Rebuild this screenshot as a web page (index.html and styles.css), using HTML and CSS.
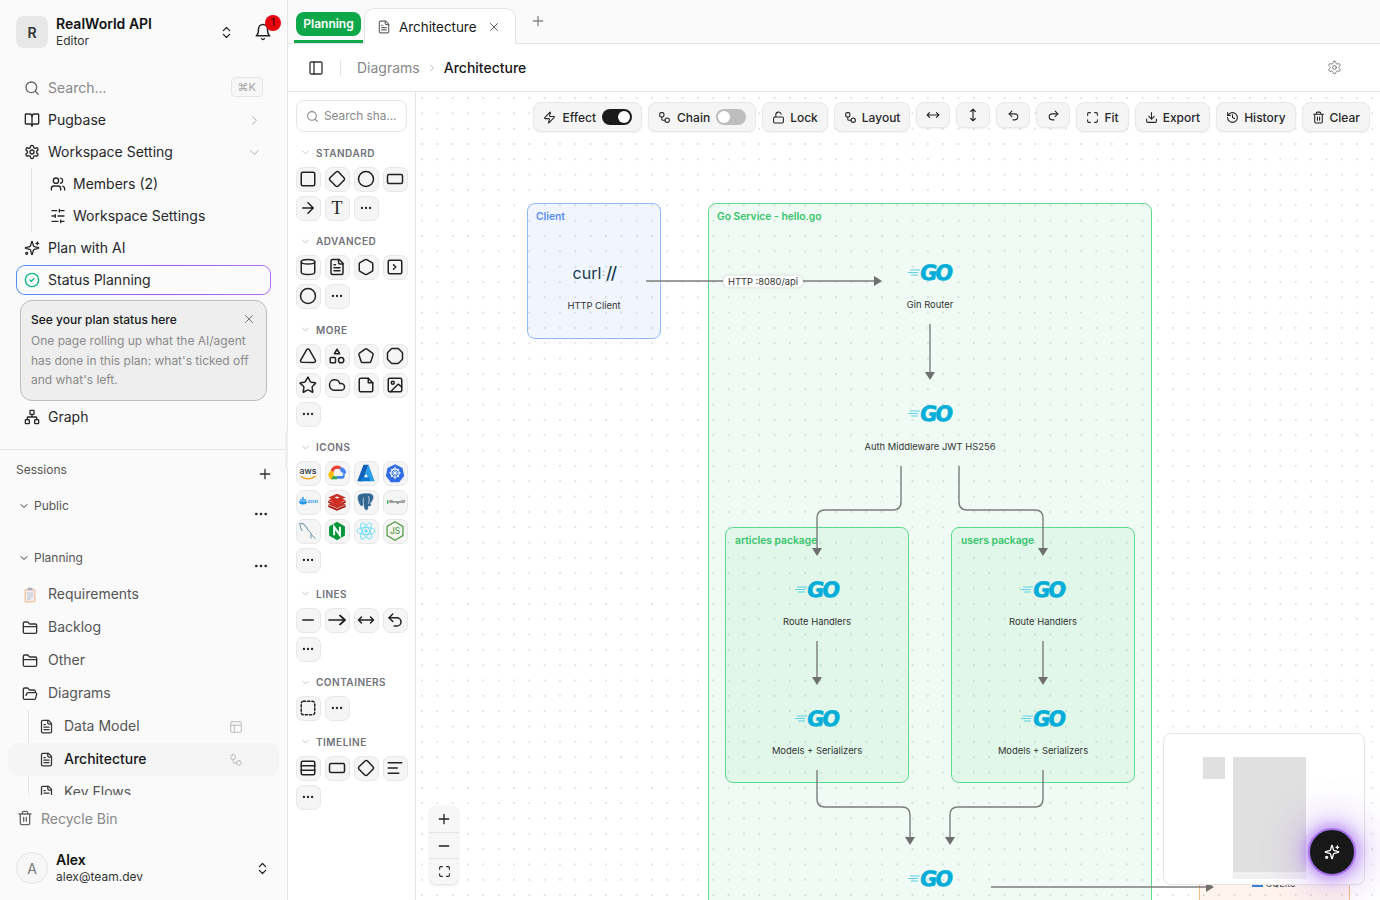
FILE: index.html
```html
<!DOCTYPE html>
<html lang="en">
<head>
    <meta charset="UTF-8">
    <title>Architecture - RealWorld API</title>
    <link rel="stylesheet" href="styles.css">
</head>
<body>
    <!-- icon sprite -->
    <svg class="sprite" xmlns="http://www.w3.org/2000/svg">
        <symbol id="i-search" viewBox="0 0 24 24"><circle cx="11" cy="11" r="8"/><path d="m21 21-4.3-4.3"/></symbol>
        <symbol id="i-book" viewBox="0 0 24 24"><path d="M12 7v14"/><path d="M3 18a1 1 0 0 1-1-1V4a1 1 0 0 1 1-1h5a4 4 0 0 1 4 4 4 4 0 0 1 4-4h5a1 1 0 0 1 1 1v13a1 1 0 0 1-1 1h-6a3 3 0 0 0-3 3 3 3 0 0 0-3-3z"/></symbol>
        <symbol id="i-right" viewBox="0 0 24 24"><path d="m9 18 6-6-6-6"/></symbol>
        <symbol id="i-down" viewBox="0 0 24 24"><path d="m6 9 6 6 6-6"/></symbol>
        <symbol id="i-updown" viewBox="0 0 24 24"><path d="m7 15 5 5 5-5"/><path d="m7 9 5-5 5 5"/></symbol>
        <symbol id="i-gear" viewBox="0 0 24 24"><path d="M12.22 2h-.44a2 2 0 0 0-2 2v.18a2 2 0 0 1-1 1.73l-.43.25a2 2 0 0 1-2 0l-.15-.08a2 2 0 0 0-2.73.73l-.22.38a2 2 0 0 0 .73 2.73l.15.1a2 2 0 0 1 1 1.72v.51a2 2 0 0 1-1 1.74l-.15.09a2 2 0 0 0-.73 2.73l.22.38a2 2 0 0 0 2.73.73l.15-.08a2 2 0 0 1 2 0l.43.25a2 2 0 0 1 1 1.73V20a2 2 0 0 0 2 2h.44a2 2 0 0 0 2-2v-.18a2 2 0 0 1 1-1.73l.43-.25a2 2 0 0 1 2 0l.15.08a2 2 0 0 0 2.73-.73l.22-.39a2 2 0 0 0-.73-2.73l-.15-.08a2 2 0 0 1-1-1.74v-.5a2 2 0 0 1 1-1.74l.15-.09a2 2 0 0 0 .73-2.73l-.22-.38a2 2 0 0 0-2.73-.73l-.15.08a2 2 0 0 1-2 0l-.43-.25a2 2 0 0 1-1-1.73V4a2 2 0 0 0-2-2z"/><circle cx="12" cy="12" r="3"/></symbol>
        <symbol id="i-users" viewBox="0 0 24 24"><path d="M16 21v-2a4 4 0 0 0-4-4H6a4 4 0 0 0-4 4v2"/><circle cx="9" cy="7" r="4"/><path d="M22 21v-2a4 4 0 0 0-3-3.87"/><path d="M16 3.13a4 4 0 0 1 0 7.75"/></symbol>
        <symbol id="i-sliders" viewBox="0 0 24 24"><path d="M21 4h-7M10 4H3M21 12h-9M8 12H3M21 20h-5M12 20H3M14 2v4M8 10v4M16 18v4"/></symbol>
        <symbol id="i-sparkle" viewBox="0 0 24 24"><path d="M9.937 15.5A2 2 0 0 0 8.5 14.063l-6.135-1.582a.5.5 0 0 1 0-.962L8.5 9.936A2 2 0 0 0 9.937 8.5l1.582-6.135a.5.5 0 0 1 .963 0L14.063 8.5A2 2 0 0 0 15.5 9.937l6.135 1.581a.5.5 0 0 1 0 .964L15.5 14.063a2 2 0 0 0-1.437 1.437l-1.582 6.135a.5.5 0 0 1-.963 0z"/><path d="M20 3v4M22 5h-4"/><circle cx="4" cy="20" r="1.5"/></symbol>
        <symbol id="i-check" viewBox="0 0 24 24"><circle cx="12" cy="12" r="10"/><path d="m9 12 2 2 4-4"/></symbol>
        <symbol id="i-x" viewBox="0 0 24 24"><path d="M18 6 6 18M6 6l12 12"/></symbol>
        <symbol id="i-plus" viewBox="0 0 24 24"><path d="M5 12h14M12 5v14"/></symbol>
        <symbol id="i-minus" viewBox="0 0 24 24"><path d="M5 12h14"/></symbol>
        <symbol id="i-dots" viewBox="0 0 24 24"><g fill="currentColor" stroke="none"><circle cx="5" cy="12" r="2"/><circle cx="12" cy="12" r="2"/><circle cx="19" cy="12" r="2"/></g></symbol>
        <symbol id="i-graph" viewBox="0 0 24 24"><rect x="16" y="16" width="6" height="6" rx="1"/><rect x="2" y="16" width="6" height="6" rx="1"/><rect x="9" y="2" width="6" height="6" rx="1"/><path d="M5 16v-3a1 1 0 0 1 1-1h12a1 1 0 0 1 1 1v3"/><path d="M12 12V8"/></symbol>
        <symbol id="i-folder" viewBox="0 0 24 24"><path d="M20 20a2 2 0 0 0 2-2V8a2 2 0 0 0-2-2h-7.9a2 2 0 0 1-1.69-.9L9.6 3.9A2 2 0 0 0 7.93 3H4a2 2 0 0 0-2 2v13a2 2 0 0 0 2 2Z"/><path d="M2 10h20"/></symbol>
        <symbol id="i-folder-open" viewBox="0 0 24 24"><path d="m6 14 1.5-2.9A2 2 0 0 1 9.24 10H20a2 2 0 0 1 1.94 2.5l-1.54 6a2 2 0 0 1-1.95 1.5H4a2 2 0 0 1-2-2V5a2 2 0 0 1 2-2h3.9a2 2 0 0 1 1.69.9l.81 1.2a2 2 0 0 0 1.67.9H18a2 2 0 0 1 2 2v2"/></symbol>
        <symbol id="i-file" viewBox="0 0 24 24"><path d="M15 2H6a2 2 0 0 0-2 2v16a2 2 0 0 0 2 2h12a2 2 0 0 0 2-2V7Z"/><path d="M14 2v4a2 2 0 0 0 2 2h4"/><path d="M10 9H8M16 13H8M16 17H8"/></symbol>
        <symbol id="i-table" viewBox="0 0 24 24"><rect x="3" y="3" width="18" height="18" rx="2"/><path d="M3 9h18M9 21V9"/></symbol>
        <symbol id="i-flow" viewBox="0 0 24 24"><rect x="3" y="3" width="8" height="8" rx="3"/><path d="M7 11v4a2 2 0 0 0 2 2h4"/><rect x="13" y="13" width="8" height="8" rx="4"/></symbol>
        <symbol id="i-trash" viewBox="0 0 24 24"><path d="M3 6h18M19 6v14c0 1-1 2-2 2H7c-1 0-2-1-2-2V6M8 6V4c0-1 1-2 2-2h4c1 0 2 1 2 2v2M10 11v6M14 11v6"/></symbol>
        <symbol id="i-panel" viewBox="0 0 24 24"><rect x="3" y="3" width="18" height="18" rx="2"/><path d="M9 3v18"/></symbol>
        <symbol id="i-bell" viewBox="0 0 24 24"><path d="M6 8a6 6 0 0 1 12 0c0 7 3 9 3 9H3s3-2 3-9"/><path d="M10.3 21a1.94 1.94 0 0 0 3.4 0"/></symbol>
        <symbol id="i-zap" viewBox="0 0 24 24"><path d="M4 14a1 1 0 0 1-.78-1.63l9.9-10.2a.5.5 0 0 1 .86.46l-1.92 6.02A1 1 0 0 0 13 10h7a1 1 0 0 1 .78 1.63l-9.9 10.2a.5.5 0 0 1-.86-.46l1.92-6.02A1 1 0 0 0 11 14z"/></symbol>
        <symbol id="i-lock" viewBox="0 0 24 24"><rect x="3" y="11" width="18" height="11" rx="2"/><path d="M7 11V7a5 5 0 0 1 9.9-1"/></symbol>
        <symbol id="i-hmove" viewBox="0 0 24 24"><path d="m18 8 4 4-4 4M2 12h20M6 8l-4 4 4 4"/></symbol>
        <symbol id="i-vmove" viewBox="0 0 24 24"><path d="M12 2v20M8 18l4 4 4-4M8 6l4-4 4 4"/></symbol>
        <symbol id="i-undo" viewBox="0 0 24 24"><path d="M9 14 4 9l5-5"/><path d="M4 9h10.5a5.5 5.5 0 0 1 0 11H11"/></symbol>
        <symbol id="i-redo" viewBox="0 0 24 24"><path d="m15 14 5-5-5-5"/><path d="M20 9H9.5a5.5 5.5 0 0 0 0 11H13"/></symbol>
        <symbol id="i-fit" viewBox="0 0 24 24"><path d="M8 3H5a2 2 0 0 0-2 2v3M21 8V5a2 2 0 0 0-2-2h-3M3 16v3a2 2 0 0 0 2 2h3M16 21h3a2 2 0 0 0 2-2v-3"/></symbol>
        <symbol id="i-download" viewBox="0 0 24 24"><path d="M21 15v4a2 2 0 0 1-2 2H5a2 2 0 0 1-2-2v-4"/><path d="m7 10 5 5 5-5M12 15V3"/></symbol>
        <symbol id="i-history" viewBox="0 0 24 24"><path d="M3 12a9 9 0 1 0 9-9 9.75 9.75 0 0 0-6.74 2.74L3 8"/><path d="M3 3v5h5M12 7v5l4 2"/></symbol>

        <symbol id="s-square" viewBox="0 0 24 24"><rect x="3" y="3" width="18" height="18" rx="2"/></symbol>
        <symbol id="s-diamond" viewBox="0 0 24 24"><path d="M2.7 10.3a2.41 2.41 0 0 0 0 3.41l7.59 7.59a2.41 2.41 0 0 0 3.41 0l7.59-7.59a2.41 2.41 0 0 0 0-3.41L14.1 2.7a2.41 2.41 0 0 0-3.41 0Z"/></symbol>
        <symbol id="s-circle" viewBox="0 0 24 24"><circle cx="12" cy="12" r="10"/></symbol>
        <symbol id="s-rect" viewBox="0 0 24 24"><rect x="2" y="6" width="20" height="12" rx="2"/></symbol>
        <symbol id="s-arrow" viewBox="0 0 24 24"><path d="M5 12h14M12 5l7 7-7 7"/></symbol>
        <symbol id="s-cylinder" viewBox="0 0 24 24"><ellipse cx="12" cy="5" rx="9" ry="3"/><path d="M3 5v14a9 3 0 0 0 18 0V5"/></symbol>
        <symbol id="s-hexagon" viewBox="0 0 24 24"><path d="M21 16V8a2 2 0 0 0-1-1.73l-7-4a2 2 0 0 0-2 0l-7 4A2 2 0 0 0 3 8v8a2 2 0 0 0 1 1.73l7 4a2 2 0 0 0 2 0l7-4A2 2 0 0 0 21 16z"/></symbol>
        <symbol id="s-terminal" viewBox="0 0 24 24"><rect x="3" y="3" width="18" height="18" rx="2"/><path d="m10 9 3 3-3 3"/></symbol>
        <symbol id="s-triangle" viewBox="0 0 24 24"><path d="M13.7 3.5a2 2 0 0 0-3.4 0l-8 14A2 2 0 0 0 4 20.5h16a2 2 0 0 0 1.7-3z"/></symbol>
        <symbol id="s-shapes" viewBox="0 0 24 24"><path d="M12 3 8.5 9h7z"/><rect x="3" y="14" width="7" height="7" rx="1"/><circle cx="17.5" cy="17.5" r="3.5"/></symbol>
        <symbol id="s-pentagon" viewBox="0 0 24 24"><path d="M10.8 2.9a2 2 0 0 1 2.4 0l7.5 5.4a2 2 0 0 1 .7 2.2l-2.9 8.8a2 2 0 0 1-1.9 1.4H7.4a2 2 0 0 1-1.9-1.4l-2.9-8.8a2 2 0 0 1 .7-2.2z"/></symbol>
        <symbol id="s-octagon" viewBox="0 0 24 24"><path d="M8.3 2h7.4a2 2 0 0 1 1.4.6l4.3 4.3a2 2 0 0 1 .6 1.4v7.4a2 2 0 0 1-.6 1.4l-4.3 4.3a2 2 0 0 1-1.4.6H8.3a2 2 0 0 1-1.4-.6l-4.3-4.3a2 2 0 0 1-.6-1.4V8.3a2 2 0 0 1 .6-1.4l4.3-4.3A2 2 0 0 1 8.3 2z"/></symbol>
        <symbol id="s-star" viewBox="0 0 24 24"><path d="M11.5 2.3a.5.5 0 0 1 1 0l2.3 4.7a2 2 0 0 0 1.6 1.2l5.2.8a.5.5 0 0 1 .3.9l-3.8 3.7a2 2 0 0 0-.6 1.9l.9 5.2a.5.5 0 0 1-.8.6l-4.6-2.5a2 2 0 0 0-2 0l-4.6 2.5a.5.5 0 0 1-.8-.6l.9-5.2a2 2 0 0 0-.6-1.9L1.6 9.9a.5.5 0 0 1 .3-.9l5.2-.8A2 2 0 0 0 8.7 7z"/></symbol>
        <symbol id="s-cloud" viewBox="0 0 24 24"><path d="M17.5 19H9a7 7 0 1 1 6.71-9h1.79a4.5 4.5 0 1 1 0 9Z"/></symbol>
        <symbol id="s-note" viewBox="0 0 24 24"><path d="M15 3H5a2 2 0 0 0-2 2v14a2 2 0 0 0 2 2h14a2 2 0 0 0 2-2V9z"/><path d="M15 3v6h6"/></symbol>
        <symbol id="s-image" viewBox="0 0 24 24"><rect x="3" y="3" width="18" height="18" rx="2"/><circle cx="9" cy="9" r="2"/><path d="m21 15-3.1-3.1a2 2 0 0 0-2.8 0L6 21"/></symbol>
        <symbol id="s-dashed" viewBox="0 0 24 24"><rect x="3" y="3" width="18" height="18" rx="3" stroke-dasharray="3 2.6"/></symbol>
        <symbol id="s-rows" viewBox="0 0 24 24"><rect x="3" y="3" width="18" height="18" rx="2"/><path d="M3 9h18M3 15h18"/></symbol>
        <symbol id="s-lines" viewBox="0 0 24 24"><path d="M21 5H3M15 12H3M17 19H3"/></symbol>

        <symbol id="b-aws" viewBox="0 0 24 24"><text x="12" y="13" class="b-text" font-size="10.5" font-weight="500" fill="#252f3e" text-anchor="middle">aws</text><path d="M3 16c5 4 13 4 18 0" fill="none" stroke="#f90" stroke-width="1.6"/></symbol>
        <symbol id="b-gcloud" viewBox="0 0 24 24"><path d="M15 7.5 17.5 5A8 8 0 0 0 4.5 9l3 2.500A5 5 0 0 1 15 7.5z" fill="#ea4335"/><path d="M17.5 5 15 7.5a5 5 0 0 1 1.8 3.5h1A3.5 3.5 0 0 1 21 14l2-2.500A8 8 0 0 0 17.5 5z" fill="#4285f4"/><path d="M21 14a3.5 3.5 0 0 1-3 5h-6v-3.500h6a1.8 1.8 0 0 0 0-3.500l1-1z" fill="#4285f4"/><path d="M4.5 9A6 6 0 0 0 5 19.5h2.500L9 16a2.500 2.500 0 0 1 .5-4.500l-2 0z" fill="#fbbc05"/><path d="M5 19.5h7V16H7z" fill="#34a853"/></symbol>
        <symbol id="b-azure" viewBox="0 0 24 24"><path d="M9 2h6L8 22H1.5z" fill="#0f5fb5"/><path d="M15 2l7.5 20H16L13 14l-3 .1z" fill="#2a9fe8"/><path d="M7 17h9l1 5H5z" fill="#0a78d4"/></symbol>
        <symbol id="b-k8s" viewBox="0 0 24 24"><path d="M12 1.5 21 6l2 9.500-6 7.500H7l-6-7.500L3 6z" fill="#326ce5"/><circle cx="12" cy="12" r="5" fill="none" stroke="#fff" stroke-width="1.3"/><path d="M12 4.500v15M5 12h14M7 7l10 10M17 7 7 17" stroke="#fff" stroke-width="1"/></symbol>
        <symbol id="b-docker" viewBox="0 0 24 24"><path d="M1 11h10c0 2.500-2 4-5 4-3 0-4.500-1.500-5-4z" fill="#2496ed"/><path d="M2.500 8.500h2v2h-2zM5 8.500h2v2H5zM7.500 8.500h2v2h-2zM5 6h2v2H5z" fill="#2496ed"/><text x="11.5" y="13" class="b-text" font-size="4.5" font-weight="600" fill="#2496ed">docker</text></symbol>
        <symbol id="b-redis" viewBox="0 0 24 24"><path d="M1.5 15.500 12 20l10.500-4.500V18L12 22.500 1.500 18z" fill="#a41e11"/><path d="M1.5 10.500 12 15l10.500-4.500V13L12 17.500 1.500 13z" fill="#a41e11"/><path d="M1.5 15 12 10.500 22.500 15 12 19.500z" fill="#c6302b"/><path d="M1.5 10 12 5.500 22.500 10 12 14.500z" fill="#d82c20"/><path d="M1.5 6.500 12 2l10.500 4.500L12 11z" fill="#c6302b"/><path d="M9 6.500l3-1.200 3 1.200-3 1.200z" fill="#fff"/></symbol>
        <symbol id="b-pg" viewBox="0 0 24 24"><path d="M6 2c-3 0-5 3-4 7 1 3 2 7 4 8 1 .5 2-.5 3-2 0 3 1 7 3.500 7 2 0 2.500-2 2.500-5 1.500.5 3 0 3.500-1 .5-1-1-1-1-2 2-3 5-7 3-10-2-2.500-5-3-8-2.500C11 .5 8.500 2 6 2z" fill="#336791" stroke="#fff" stroke-width=".6"/><path d="M9 7c-.5 3-.5 6 0 8M15 5c1 3 1 6 0 9" fill="none" stroke="#fff" stroke-width=".8"/></symbol>
        <symbol id="b-mongo" viewBox="0 0 24 24"><path d="M2.500 10H4v4H2.500z" fill="#13aa52"/><text x="5" y="13.5" class="b-text" font-size="4.2" font-weight="600" fill="#555">MongoDB</text></symbol>
        <symbol id="b-mysql" viewBox="0 0 24 24"><path d="M2 3c4-1 7 2 9 6 1.500 3 4 4 5 7 1 2 3 3 5 5M2 3c1 3 1 6 3 9M16 16c-1 1-1 3 0 5" fill="none" stroke="#4a7a94" stroke-width="1"/><path d="M5 3.500c3 1 5 3 6.500 6" fill="none" stroke="#8aa" stroke-width=".7"/></symbol>
        <symbol id="b-nginx" viewBox="0 0 24 24"><path d="M12 1 21.500 6.500v11L12 23l-9.500-5.500v-11z" fill="#009639"/><path d="M8.500 17V7l7 10V7" fill="none" stroke="#fff" stroke-width="2.4"/></symbol>
        <symbol id="b-react" viewBox="0 0 24 24"><circle cx="12" cy="12" r="2" fill="#61dafb"/><g fill="none" stroke="#61dafb" stroke-width="1"><ellipse cx="12" cy="12" rx="11" ry="4.2"/><ellipse cx="12" cy="12" rx="11" ry="4.2" transform="rotate(60 12 12)"/><ellipse cx="12" cy="12" rx="11" ry="4.2" transform="rotate(120 12 12)"/></g></symbol>
        <symbol id="b-node" viewBox="0 0 24 24"><path d="M12 1 21.500 6.500v11L12 23l-9.500-5.500v-11z" fill="none" stroke="#539e43" stroke-width="1.5"/><text x="12" y="16" class="b-text" font-size="10" font-weight="500" fill="#539e43" text-anchor="middle">JS</text></symbol>
    </svg>

    <div class="app">
        <aside class="sidebar">
            <div class="workspace">
                <div class="avatar avatar-ws">R</div>
                <div class="who">
                    <strong>RealWorld API</strong>
                    <span>Editor</span>
                </div>
                <svg class="ic updown"><use href="#i-updown"/></svg>
                <div class="bell">
                    <svg class="ic ic-18"><use href="#i-bell"/></svg>
                    <span class="badge">1</span>
                </div>
            </div>

            <nav class="nav">
                <div class="nav-row muted">
                    <svg class="ic"><use href="#i-search"/></svg>
                    <span class="grow">Search...</span>
                    <kbd class="kbd">⌘K</kbd>
                </div>
                <div class="nav-row">
                    <svg class="ic"><use href="#i-book"/></svg>
                    <span class="grow">Pugbase</span>
                    <svg class="ic chev"><use href="#i-right"/></svg>
                </div>
                <div class="nav-row">
                    <svg class="ic"><use href="#i-gear"/></svg>
                    <span class="grow">Workspace Setting</span>
                    <svg class="ic chev"><use href="#i-down"/></svg>
                </div>
                <div class="nav-sub">
                    <div class="nav-row">
                        <svg class="ic"><use href="#i-users"/></svg>
                        <span>Members (2)</span>
                    </div>
                    <div class="nav-row">
                        <svg class="ic"><use href="#i-sliders"/></svg>
                        <span>Workspace Settings</span>
                    </div>
                </div>
                <div class="nav-row">
                    <svg class="ic"><use href="#i-sparkle"/></svg>
                    <span>Plan with AI</span>
                </div>
                <div class="nav-row status">
                    <svg class="ic ic-green"><use href="#i-check"/></svg>
                    <span>Status Planning</span>
                </div>
            </nav>

            <div class="callout">
                <div class="callout-head">
                    <strong>See your plan status here</strong>
                    <svg class="ic ic-14"><use href="#i-x"/></svg>
                </div>
                <p>One page rolling up what the AI/agent has done in this plan: what's ticked off and what's left.</p>
            </div>

            <div class="nav-row graph-row">
                <svg class="ic"><use href="#i-graph"/></svg>
                <span>Graph</span>
            </div>

            <div class="sessions">
                <div class="sessions-head">
                    <span>Sessions</span>
                    <svg class="ic plus"><use href="#i-plus"/></svg>
                </div>
                <div class="group-row group-public">
                    <svg class="ic ic-12"><use href="#i-down"/></svg>
                    <span class="grow">Public</span>
                    <svg class="ic dots"><use href="#i-dots"/></svg>
                </div>
                <div class="group-row group-planning">
                    <svg class="ic ic-12"><use href="#i-down"/></svg>
                    <span class="grow">Planning</span>
                    <svg class="ic dots"><use href="#i-dots"/></svg>
                </div>
                <div class="tree-row">
                    <svg class="clipboard" viewBox="0 0 16 16">
                        <rect x="2.5" y="2" width="11" height="13.5" rx="1.5" fill="#f3c9a8"/>
                        <rect x="4" y="3.5" width="8" height="10.5" fill="#eeeef4"/>
                        <path d="M5 6h6M5 8h6M5 10h6M5 12h4" stroke="#b9b9cc" stroke-width=".8"/>
                        <rect x="5.5" y=".8" width="5" height="2.5" rx=".8" fill="#b0b0bc"/>
                    </svg>
                    <span>Requirements</span>
                </div>
                <div class="tree-row">
                    <svg class="ic"><use href="#i-folder"/></svg>
                    <span>Backlog</span>
                </div>
                <div class="tree-row">
                    <svg class="ic"><use href="#i-folder"/></svg>
                    <span>Other</span>
                </div>
                <div class="tree-row">
                    <svg class="ic"><use href="#i-folder-open"/></svg>
                    <span>Diagrams</span>
                </div>
                <div class="tree-sub">
                    <div class="tree-row">
                        <svg class="ic ic-15"><use href="#i-file"/></svg>
                        <span class="grow">Data Model</span>
                        <svg class="ic ic-14 trail"><use href="#i-table"/></svg>
                    </div>
                    <div class="tree-row active">
                        <svg class="ic ic-15"><use href="#i-file"/></svg>
                        <span class="grow">Architecture</span>
                        <svg class="ic ic-14 trail"><use href="#i-flow"/></svg>
                    </div>
                    <div class="tree-row">
                        <svg class="ic ic-15"><use href="#i-file"/></svg>
                        <span class="grow">Key Flows</span>
                    </div>
                </div>
            </div>

            <div class="recycle">
                <svg class="ic"><use href="#i-trash"/></svg>
                <span>Recycle Bin</span>
            </div>

            <div class="user">
                <div class="avatar avatar-user">A</div>
                <div class="who">
                    <strong>Alex</strong>
                    <span>alex@team.dev</span>
                </div>
                <svg class="ic updown"><use href="#i-updown"/></svg>
            </div>
        </aside>

        <main class="main">
            <div class="tabbar">
                <div class="tab-planning"><span>Planning</span></div>
                <div class="tab">
                    <svg class="ic ic-14 tab-doc"><use href="#i-file"/></svg>
                    <span>Architecture</span>
                    <svg class="ic ic-14 tab-x"><use href="#i-x"/></svg>
                </div>
                <svg class="ic tab-add"><use href="#i-plus"/></svg>
            </div>

            <header class="crumbs">
                <svg class="ic panel-ic"><use href="#i-panel"/></svg>
                <span class="crumb-sep"></span>
                <span class="crumb">Diagrams</span>
                <svg class="ic ic-12 crumb-chev"><use href="#i-right"/></svg>
                <span class="crumb crumb-now">Architecture</span>
                <svg class="ic crumb-gear"><use href="#i-gear"/></svg>
            </header>

            <div class="workarea">
                <section class="shapes">
                    <div class="shape-search">
                        <svg class="ic ic-13"><use href="#i-search"/></svg>
                        <span>Search sha...</span>
                    </div>

                    <div class="shape-head"><svg class="ic ic-11"><use href="#i-down"/></svg>STANDARD</div>
                    <div class="shape-grid">
                        <button class="shape"><svg class="ic"><use href="#s-square"/></svg></button>
                        <button class="shape"><svg class="ic"><use href="#s-diamond"/></svg></button>
                        <button class="shape"><svg class="ic"><use href="#s-circle"/></svg></button>
                        <button class="shape"><svg class="ic"><use href="#s-rect"/></svg></button>
                        <button class="shape"><svg class="ic"><use href="#s-arrow"/></svg></button>
                        <button class="shape shape-t">T</button>
                        <button class="shape"><svg class="ic ic-14"><use href="#i-dots"/></svg></button>
                    </div>

                    <div class="shape-head"><svg class="ic ic-11"><use href="#i-down"/></svg>ADVANCED</div>
                    <div class="shape-grid">
                        <button class="shape"><svg class="ic"><use href="#s-cylinder"/></svg></button>
                        <button class="shape"><svg class="ic"><use href="#i-file"/></svg></button>
                        <button class="shape"><svg class="ic"><use href="#s-hexagon"/></svg></button>
                        <button class="shape"><svg class="ic"><use href="#s-terminal"/></svg></button>
                        <button class="shape"><svg class="ic"><use href="#s-circle"/></svg></button>
                        <button class="shape"><svg class="ic ic-14"><use href="#i-dots"/></svg></button>
                    </div>

                    <div class="shape-head"><svg class="ic ic-11"><use href="#i-down"/></svg>MORE</div>
                    <div class="shape-grid">
                        <button class="shape"><svg class="ic"><use href="#s-triangle"/></svg></button>
                        <button class="shape"><svg class="ic"><use href="#s-shapes"/></svg></button>
                        <button class="shape"><svg class="ic"><use href="#s-pentagon"/></svg></button>
                        <button class="shape"><svg class="ic"><use href="#s-octagon"/></svg></button>
                        <button class="shape"><svg class="ic"><use href="#s-star"/></svg></button>
                        <button class="shape"><svg class="ic"><use href="#s-cloud"/></svg></button>
                        <button class="shape"><svg class="ic"><use href="#s-note"/></svg></button>
                        <button class="shape"><svg class="ic"><use href="#s-image"/></svg></button>
                        <button class="shape"><svg class="ic ic-14"><use href="#i-dots"/></svg></button>
                    </div>

                    <div class="shape-head"><svg class="ic ic-11"><use href="#i-down"/></svg>ICONS</div>
                    <div class="shape-grid">
                        <button class="shape"><svg class="brand"><use href="#b-aws"/></svg></button>
                        <button class="shape"><svg class="brand"><use href="#b-gcloud"/></svg></button>
                        <button class="shape"><svg class="brand"><use href="#b-azure"/></svg></button>
                        <button class="shape"><svg class="brand"><use href="#b-k8s"/></svg></button>
                        <button class="shape"><svg class="brand"><use href="#b-docker"/></svg></button>
                        <button class="shape"><svg class="brand"><use href="#b-redis"/></svg></button>
                        <button class="shape"><svg class="brand"><use href="#b-pg"/></svg></button>
                        <button class="shape"><svg class="brand"><use href="#b-mongo"/></svg></button>
                        <button class="shape"><svg class="brand"><use href="#b-mysql"/></svg></button>
                        <button class="shape"><svg class="brand"><use href="#b-nginx"/></svg></button>
                        <button class="shape"><svg class="brand"><use href="#b-react"/></svg></button>
                        <button class="shape"><svg class="brand"><use href="#b-node"/></svg></button>
                        <button class="shape"><svg class="ic ic-14"><use href="#i-dots"/></svg></button>
                    </div>

                    <div class="shape-head"><svg class="ic ic-11"><use href="#i-down"/></svg>LINES</div>
                    <div class="shape-grid">
                        <button class="shape"><svg class="ic"><use href="#i-minus"/></svg></button>
                        <button class="shape"><svg class="line-ic" viewBox="0 0 18 14"><path d="M1 7h16M12 2.5 17 7l-5 4.5"/></svg></button>
                        <button class="shape"><svg class="ic"><use href="#i-hmove"/></svg></button>
                        <button class="shape"><svg class="ic"><use href="#i-undo"/></svg></button>
                        <button class="shape"><svg class="ic ic-14"><use href="#i-dots"/></svg></button>
                    </div>

                    <div class="shape-head"><svg class="ic ic-11"><use href="#i-down"/></svg>CONTAINERS</div>
                    <div class="shape-grid">
                        <button class="shape"><svg class="ic"><use href="#s-dashed"/></svg></button>
                        <button class="shape"><svg class="ic ic-14"><use href="#i-dots"/></svg></button>
                    </div>

                    <div class="shape-head"><svg class="ic ic-11"><use href="#i-down"/></svg>TIMELINE</div>
                    <div class="shape-grid">
                        <button class="shape"><svg class="ic"><use href="#s-rows"/></svg></button>
                        <button class="shape"><svg class="ic"><use href="#s-rect"/></svg></button>
                        <button class="shape"><svg class="ic"><use href="#s-diamond"/></svg></button>
                        <button class="shape"><svg class="ic"><use href="#s-lines"/></svg></button>
                        <button class="shape"><svg class="ic ic-14"><use href="#i-dots"/></svg></button>
                    </div>
                </section>

                <section class="canvas">
                    <!-- containers -->
                    <div class="box box-client"><span>Client</span></div>
                    <div class="box box-green box-service"><span>Go Service - hello.go</span></div>
                    <div class="box box-green box-articles"><span>articles package</span></div>
                    <div class="box box-green box-users"><span>users package</span></div>
                    <div class="box box-sqlite"><i class="sqlite-mark"></i><span class="sqlite-label">SQLite</span></div>

                    <!-- edges, drawn in page coordinates -->
                    <svg class="edges" viewBox="416 92 964 808">
                        <g class="edge">
                            <path d="M646 281H874"/>
                            <path d="M930 324V373"/>
                            <path d="M901 466V502Q901 510 893 510H825Q817 510 817 518V549"/>
                            <path d="M959 466V502Q959 510 967 510H1035Q1043 510 1043 518V549"/>
                            <path d="M817 641V677"/>
                            <path d="M1043 641V677"/>
                            <path d="M817 770V799Q817 807 825 807H902Q910 807 910 815V838"/>
                            <path d="M1043 770V799Q1043 807 1035 807H958Q950 807 950 815V838"/>
                            <path d="M991 887H1206"/>
                        </g>
                        <g class="heads">
                            <path d="M882 281 874 276V286Z"/>
                            <path d="M930 380 925 372H935Z"/>
                            <path d="M817 556 812 548H822Z"/>
                            <path d="M1043 556 1038 548H1048Z"/>
                            <path d="M817 685 812 677H822Z"/>
                            <path d="M1043 685 1038 677H1048Z"/>
                            <path d="M910 845 905 837H915Z"/>
                            <path d="M950 845 945 837H955Z"/>
                            <path d="M1214 887 1206 882V892Z"/>
                        </g>
                    </svg>

                    <div class="edge-label">HTTP :8080/api</div>

                    <!-- nodes -->
                    <div class="node n-curl">
                        <div class="curl-logo">curl<i>:</i><em>//</em></div>
                        <span>HTTP Client</span>
                    </div>
                    <div class="node n-router">
                        <div class="go-logo"><svg viewBox="0 0 12 8"><path d="M2 1.5h10M0 4h10M3 6.5h7"/></svg><b>GO</b></div>
                        <span>Gin Router</span>
                    </div>
                    <div class="node n-auth">
                        <div class="go-logo"><svg viewBox="0 0 12 8"><path d="M2 1.5h10M0 4h10M3 6.5h7"/></svg><b>GO</b></div>
                        <span>Auth Middleware JWT HS256</span>
                    </div>
                    <div class="node n-art-route">
                        <div class="go-logo"><svg viewBox="0 0 12 8"><path d="M2 1.5h10M0 4h10M3 6.5h7"/></svg><b>GO</b></div>
                        <span>Route Handlers</span>
                    </div>
                    <div class="node n-art-models">
                        <div class="go-logo"><svg viewBox="0 0 12 8"><path d="M2 1.5h10M0 4h10M3 6.5h7"/></svg><b>GO</b></div>
                        <span>Models + Serializers</span>
                    </div>
                    <div class="node n-usr-route">
                        <div class="go-logo"><svg viewBox="0 0 12 8"><path d="M2 1.5h10M0 4h10M3 6.5h7"/></svg><b>GO</b></div>
                        <span>Route Handlers</span>
                    </div>
                    <div class="node n-usr-models">
                        <div class="go-logo"><svg viewBox="0 0 12 8"><path d="M2 1.5h10M0 4h10M3 6.5h7"/></svg><b>GO</b></div>
                        <span>Models + Serializers</span>
                    </div>
                    <div class="node n-bottom">
                        <div class="go-logo"><svg viewBox="0 0 12 8"><path d="M2 1.5h10M0 4h10M3 6.5h7"/></svg><b>GO</b></div>
                    </div>

                    <!-- toolbar -->
                    <div class="toolbar">
                        <button class="tool tool-toggle"><svg class="ic ic-13"><use href="#i-zap"/></svg>Effect<span class="toggle on"></span></button>
                        <button class="tool tool-toggle"><svg class="ic ic-13"><use href="#i-flow"/></svg>Chain<span class="toggle"></span></button>
                        <button class="tool"><svg class="ic ic-13"><use href="#i-lock"/></svg>Lock</button>
                        <button class="tool"><svg class="ic ic-13"><use href="#i-flow"/></svg>Layout</button>
                        <button class="tool tool-icon"><svg class="ic ic-14"><use href="#i-hmove"/></svg></button>
                        <button class="tool tool-icon"><svg class="ic ic-14"><use href="#i-vmove"/></svg></button>
                        <button class="tool tool-icon"><svg class="ic ic-13"><use href="#i-undo"/></svg></button>
                        <button class="tool tool-icon"><svg class="ic ic-13"><use href="#i-redo"/></svg></button>
                        <button class="tool"><svg class="ic ic-13"><use href="#i-fit"/></svg>Fit</button>
                        <button class="tool"><svg class="ic ic-13"><use href="#i-download"/></svg>Export</button>
                        <button class="tool"><svg class="ic ic-13"><use href="#i-history"/></svg>History</button>
                        <button class="tool"><svg class="ic ic-13"><use href="#i-trash"/></svg>Clear</button>
                    </div>

                    <!-- zoom -->
                    <div class="zoomer">
                        <button><svg class="ic"><use href="#i-plus"/></svg></button>
                        <button><svg class="ic"><use href="#i-minus"/></svg></button>
                        <button><svg class="ic ic-13"><use href="#i-fit"/></svg></button>
                    </div>

                    <!-- minimap -->
                    <div class="minimap">
                        <div class="mini-a"></div>
                        <div class="mini-b"></div>
                    </div>

                    <button class="ai-btn"><svg class="ic"><use href="#i-sparkle"/></svg></button>
                </section>
            </div>
        </main>
    </div>
</body>
</html>
```

FILE: styles.css
```css
* { margin: 0; padding: 0; box-sizing: border-box; }
html, body { height: 100%; overflow: hidden; }
body {
    font-family: Inter, "Noto Sans", sans-serif;
    color: #18181b;
    background: #fff;
    font-size: 14px;
}
.sprite { display: none; }
button { font-family: inherit; color: inherit; cursor: pointer; }

/* icons */
.ic {
    width: 16px;
    height: 16px;
    flex: none;
    fill: none;
    stroke: currentColor;
    stroke-width: 2;
    stroke-linecap: round;
    stroke-linejoin: round;
}
.ic-11 { width: 11px; height: 11px; }
.ic-12 { width: 12px; height: 12px; }
.ic-13 { width: 13px; height: 13px; }
.ic-14 { width: 14px; height: 14px; }
.ic-15 { width: 15px; height: 15px; }
.ic-18 { width: 18px; height: 18px; }
.ic-green { color: #10b981; }
.grow { flex: 1; }

.app { display: flex; height: 900px; }

/* sidebar */
.sidebar {
    width: 288px;
    flex: none;
    display: flex;
    flex-direction: column;
    height: 900px;
    background: #fafafa;
    border-right: 1px solid #e5e5e5;
    position: relative;
}
.sidebar::after {
    content: "";
    position: absolute;
    right: -1px;
    top: 430px;
    width: 3px;
    height: 40px;
    background: #efefef;
    border-radius: 2px;
}
.workspace {
    display: flex;
    align-items: center;
    padding: 16px 16px 0;
    height: 48px;
    margin-bottom: 24px;
}
.avatar {
    width: 32px;
    height: 32px;
    flex: none;
    border-radius: 8px;
    display: flex;
    align-items: center;
    justify-content: center;
    font-weight: 600;
    font-size: 14px;
}
.avatar-ws { background: #e7e7e7; color: #333; }
.avatar-user {
    border-radius: 50%;
    background: #f7f7f7;
    border: 1px solid #e5e5e5;
    color: #777;
    font-weight: 400;
}
.who { margin-left: 8px; flex: 1; display: flex; flex-direction: column; line-height: 17px; }
.who strong { font-size: 14px; font-weight: 600; color: #111; }
.who span { font-size: 12px; color: #333; }
.updown { width: 15px; height: 15px; margin-right: 20px; color: #222; }
.bell { position: relative; display: flex; margin-right: -1px; color: #222; }
.badge {
    position: absolute;
    top: -8px;
    right: -9px;
    width: 16px;
    height: 16px;
    border-radius: 50%;
    background: #e7000b;
    color: #300;
    font-size: 10.5px;
    line-height: 16px;
    text-align: center;
}

.nav { display: flex; flex-direction: column; }
.nav-row {
    height: 32px;
    display: flex;
    align-items: center;
    gap: 8px;
    padding: 0 24px;
    font-size: 14px;
    color: #27272a;
}
.nav-row span, .tree-row span { margin-top: -2px; }
.nav-row.muted { color: #888; }
.nav-row.muted .ic { color: #666; }
.chev { color: #aaa; width: 15px; height: 15px; margin-right: 1px; stroke-width: 1.5; }
.kbd {
    font-family: inherit;
    font-size: 11px;
    line-height: 18px;
    height: 20px;
    color: #a5a5a5;
    border: 1px solid #e5e5e5;
    border-radius: 4px;
    background: #f7f7f7;
    padding: 0 6px;
    margin-top: -2px;
}
.nav-sub { position: relative; }
.nav-sub::before {
    content: "";
    position: absolute;
    left: 31px;
    top: 0;
    bottom: 0;
    width: 1px;
    background: #e2e2e2;
}
.nav-sub .nav-row { padding-left: 50px; gap: 7px; }
.status {
    margin: 1px 16px;
    height: 30px;
    padding: 0 7px;
    border: 1.5px solid transparent;
    border-radius: 9px;
    background: linear-gradient(#fbfbfb, #fbfbfb) padding-box, linear-gradient(100deg, #4f8ff5, #a35cf0 55%, #bb6cf5) border-box;
}
.callout {
    margin: 4px 20px 0;
    padding: 9px 10px 10px;
    height: 101px;
    background: #eeeeee;
    border: 1px solid #bdbdbd;
    border-radius: 12px;
}
.callout-head {
    display: flex;
    justify-content: space-between;
    align-items: center;
    height: 18px;
    color: #666;
}
.callout-head .ic { stroke-width: 1.5; }
.callout strong { font-size: 12px; font-weight: 500; color: #18181b; }
.callout p { font-size: 12px; line-height: 19.5px; color: #8a8a8a; margin-top: 3px; }
.graph-row { margin-bottom: 16px; }

.sessions {
    border-top: 1px solid #e5e5e5;
    height: 346px;
    overflow: hidden;
    padding-top: 12px;
}
.sessions-head {
    display: flex;
    justify-content: space-between;
    padding: 0 14px 0 16px;
    height: 20px;
    font-size: 12px;
    line-height: 16px;
    color: #555;
}
.plus { margin-top: 4px; color: #333; }
.group-row {
    display: flex;
    gap: 4px;
    height: 24px;
    padding: 0 18px;
    font-size: 12px;
    line-height: 16px;
    color: #555;
}
.group-row .ic-12 { margin-top: 2px; color: #333; }
.group-row .dots { margin-top: 8px; color: #222; }
.group-public { margin-top: 16px; }
.group-planning { margin-top: 28px; }
.tree-row {
    height: 33px;
    display: flex;
    align-items: center;
    gap: 10px;
    padding: 0 22px;
    font-size: 14px;
    color: #555;
}
.tree-row .ic { color: #333; }
.group-planning + .tree-row { margin-top: 4px; }
.clipboard { width: 16px; height: 16px; flex: none; }
.tree-sub { position: relative; margin: 0 8px; }
.tree-sub::before {
    content: "";
    position: absolute;
    left: 20px;
    top: 0;
    bottom: 0;
    width: 1px;
    background: #e5e5e5;
}
.tree-sub .tree-row { padding: 0 36px 0 31px; gap: 10px; }
.tree-sub .tree-row .trail { color: #b5b5b5; stroke-width: 1.5; }
.tree-row.active {
    background: #f5f5f5;
    border-radius: 9px;
    color: #18181b;
    font-weight: 500;
    position: relative;
}
.recycle {
    height: 32px;
    margin-top: 7px;
    display: flex;
    align-items: center;
    gap: 8px;
    padding-left: 17px;
    font-size: 14px;
    color: #888;
}
.recycle .ic { color: #666; }
.user {
    display: flex;
    align-items: center;
    padding: 0 16px;
    margin-top: 17px;
}
.user .updown { margin-right: 1px; }
.user .who strong { font-size: 14px; }
.user .who span { font-size: 12px; }

/* main */
.main { flex: 1; display: flex; flex-direction: column; min-width: 0; }
.tabbar {
    height: 44px;
    flex: none;
    background: #fafafa;
    border-bottom: 1px solid #e5e5e5;
    display: flex;
    align-items: flex-start;
    padding-left: 6px;
}
.tab-planning {
    width: 69px;
    height: 43px;
    padding: 12px 2px 0;
    border-bottom: 3px solid #0ea84a;
}
.tab-planning span {
    display: block;
    height: 24px;
    background: #0ea84a;
    color: #fff;
    border-radius: 8px;
    font-size: 12px;
    font-weight: 600;
    line-height: 24px;
    text-align: center;
}
.tab {
    width: 152px;
    height: 36px;
    margin: 8px 0 0 1px;
    background: #fff;
    border: 1px solid #e5e5e5;
    border-bottom: 0;
    border-radius: 10px 10px 0 0;
    display: flex;
    align-items: center;
    padding: 0 14px 0 12px;
    font-size: 13.4px;
    gap: 8px;
}
.tab-doc { color: #666; }
.tab span { flex: 1; }
.tab-x { color: #555; stroke-width: 1.6; }
.tab-add { color: #888; margin: 13px 0 0 14px; }

.crumbs {
    height: 48px;
    flex: none;
    display: flex;
    align-items: center;
    padding-left: 20px;
    border-bottom: 1px solid #e5e5e5;
    font-size: 14px;
}
.panel-ic { color: #333; }
.crumb-sep { width: 1px; height: 16px; background: #e5e5e5; margin: 0 16px; }
.crumb { color: #888; }
.crumb-chev { color: #bbb; margin: 0 6px; }
.crumb-now { color: #18181b; font-weight: 500; flex: 1; }
.crumb-gear { color: #777; width: 15px; height: 15px; margin-right: 38px; stroke-width: 1.6; }

.workarea { flex: 1; display: flex; min-height: 0; }

/* shape panel */
.shapes {
    width: 128px;
    flex: none;
    padding: 8px;
    background: #fff;
    border-right: 1px solid #e5e5e5;
    overflow: hidden;
}
.shape-search {
    height: 32px;
    border: 1px solid #e5e5e5;
    border-radius: 8px;
    display: flex;
    align-items: center;
    gap: 5px;
    padding-left: 9px;
    font-size: 11.8px;
    color: #888;
    white-space: nowrap;
}
.shape-head {
    display: flex;
    align-items: center;
    gap: 5px;
    height: 16px;
    margin-top: 12.5px;
    padding-left: 4px;
    font-size: 10px;
    font-weight: 600;
    letter-spacing: .5px;
    color: #71717a;
}
.shape-head .ic { color: #aaa; stroke-width: 1.5; }
.shape-grid {
    display: grid;
    grid-template-columns: repeat(4, 25px);
    grid-auto-rows: 25px;
    gap: 4px;
    margin-top: 6px;
}
.shape {
    background: #f5f5f5;
    border: 1px solid #e8e8e8;
    border-radius: 7px;
    padding: 0 1px 1px 0;
    display: flex;
    align-items: center;
    justify-content: center;
    color: #222;
}
.shape .ic { width: 18px; height: 18px; }
.shape .ic-14 { width: 14px; height: 14px; }
.shape-t { font-family: "Liberation Serif", serif; font-size: 18px; line-height: 1; }
.brand { width: 20px; height: 20px; }
.b-text { font-family: Inter, sans-serif; }
.line-ic { width: 18px; height: 14px; fill: none; stroke: currentColor; stroke-width: 1.7; stroke-linecap: round; stroke-linejoin: round; }

/* canvas */
.canvas {
    flex: 1;
    position: relative;
    overflow: hidden;
    background-color: #fff;
    background-image: radial-gradient(circle, #d9d9d9 .6px, transparent .9px);
    background-size: 15.33px 15.33px;
    background-position: -1.67px -1.67px;
}
.box { position: absolute; border: 1px solid; border-radius: 8px; }
.box > span {
    position: absolute;
    left: 8px;
    top: 6px;
    font-size: 10.3px;
    font-weight: 600;
    line-height: 13px;
}
.box-client {
    left: 111px;
    top: 111px;
    width: 134px;
    height: 136px;
    background: rgba(59, 130, 246, .08);
    border-color: #93b8f8;
    color: #5b8ef5;
}
.box-green { background: rgba(34, 197, 94, .07); border-color: #5fd98c; color: #38c56d; }
.box-service { left: 292px; top: 111px; width: 444px; height: 900px; }
.box-articles { left: 309px; top: 435px; width: 184px; height: 256px; }
.box-users { left: 535px; top: 435px; width: 184px; height: 256px; }
.box-articles > span, .box-users > span { left: 9px; }
.box-sqlite {
    left: 783px;
    top: 700px;
    width: 151px;
    height: 300px;
    background: rgba(249, 115, 22, .08);
    border-color: #f7bd85;
}
.box-sqlite .sqlite-label {
    left: 66px;
    top: 84px;
    font-size: 9.5px;
    font-weight: 400;
    color: #444;
}
.sqlite-mark { position: absolute; left: 52px; top: 91px; width: 11px; height: 3px; background: #3b7dd8; }
.edges { position: absolute; left: 0; top: 0; width: 964px; height: 808px; }
.edge path { fill: none; stroke: #7c7c7c; stroke-width: 1.4; }
.heads path { fill: #6f6f6f; }
.edge-label {
    position: absolute;
    left: 307px;
    top: 183px;
    width: 80px;
    height: 13px;
    background: #fff;
    border: 1px solid #ececec;
    border-radius: 5px;
    box-shadow: 0 0 2px rgba(0, 0, 0, .15);
    font-size: 9.3px;
    line-height: 11px;
    text-align: center;
    color: #333;
}
.node {
    position: absolute;
    width: 140px;
    display: flex;
    flex-direction: column;
    align-items: center;
    gap: 17px;
    font-size: 9.4px;
    line-height: 12px;
    color: #333;
}
.n-curl { left: 108px; top: 171px; }
.n-router { left: 444px; top: 170px; }
.n-auth { left: 444px; top: 311px; gap: 18px; }
.n-art-route { left: 331px; top: 487px; }
.n-art-models { left: 331px; top: 616px; }
.n-usr-route { left: 557px; top: 487px; }
.n-usr-models { left: 557px; top: 616px; }
.n-bottom { left: 444px; top: 776px; }
.go-logo {
    height: 20px;
    display: flex;
    align-items: center;
    margin: 1px 0 -1px;
    white-space: nowrap;
}
.go-logo svg { width: 12px; height: 9px; fill: none; stroke: #5fd0e8; stroke-width: 1.2; margin-top: -2px; }
.go-logo b {
    display: block;
    font-family: "DejaVu Sans", sans-serif;
    font-size: 21px;
    font-weight: 700;
    letter-spacing: -2px;
    line-height: 20px;
    color: #00add8;
    -webkit-text-stroke: .6px #00add8;
    transform: skewX(-8deg);
}
.curl-logo {
    height: 20px;
    font-size: 16px;
    line-height: 20px;
    color: #153b50;
    font-weight: 400;
    display: flex;
    align-items: center;
}
.curl-logo i { font-style: normal; color: #5d7f90; font-size: 9px; margin: 0 1px; }
.curl-logo em { font-style: normal; font-size: 17px; font-weight: 500; letter-spacing: -1.5px; }

.toolbar {
    position: absolute;
    top: 10px;
    right: 10px;
    display: flex;
    align-items: flex-start;
    gap: 6px;
}
.tool {
    height: 30px;
    display: flex;
    align-items: center;
    gap: 5px;
    padding: 0 9px;
    background: #f5f5f5;
    border: 1px solid #e8e8e8;
    border-radius: 8px;
    box-shadow: 0 1px 2px rgba(0, 0, 0, .06);
    font-size: 12px;
    font-weight: 500;
    color: #27272a;
}
.tool-toggle { gap: 6px; }
.tool-icon { height: 26px; width: 34px; justify-content: center; padding: 0; }
.toggle {
    width: 30px;
    height: 16px;
    border-radius: 8px;
    background: #bdbdbd;
    position: relative;
}
.toggle::after {
    content: "";
    position: absolute;
    left: 2px;
    top: 2px;
    width: 12px;
    height: 12px;
    border-radius: 50%;
    background: #fff;
}
.toggle.on { background: #1a1a1a; }
.toggle.on::after { left: 16px; }

.zoomer {
    position: absolute;
    left: 14px;
    top: 714px;
    width: 28px;
    background: #f7f7f7;
    border-radius: 6px;
    box-shadow: 0 1px 3px rgba(0, 0, 0, .15);
    display: flex;
    flex-direction: column;
}
.zoomer button {
    height: 26px;
    border: 0;
    background: none;
    display: flex;
    align-items: center;
    justify-content: center;
    color: #222;
}
.zoomer button + button { border-top: 1px solid #e5e5e5; }
.minimap {
    position: absolute;
    left: 747px;
    top: 641px;
    width: 202px;
    height: 152px;
    background: #fff;
    border: 1px solid #e5e5e5;
    border-radius: 8px;
}
.mini-a { position: absolute; left: 39px; top: 23px; width: 22px; height: 22px; background: #e0e0e0; }
.mini-b {
    position: absolute;
    left: 69px;
    top: 23px;
    width: 73px;
    height: 122px;
    background: linear-gradient(#e0e0e0 94%, #f0f0f0 94%);
}
.ai-btn {
    position: absolute;
    left: 892px;
    top: 736px;
    width: 48px;
    height: 48px;
    border-radius: 50%;
    background: #181818;
    border: 2px solid #a672ec;
    color: #fff;
    display: flex;
    align-items: center;
    justify-content: center;
    box-shadow: 0 0 12px 4px rgba(160, 100, 240, .55), 0 0 36px 14px rgba(160, 100, 240, .3);
}
```
